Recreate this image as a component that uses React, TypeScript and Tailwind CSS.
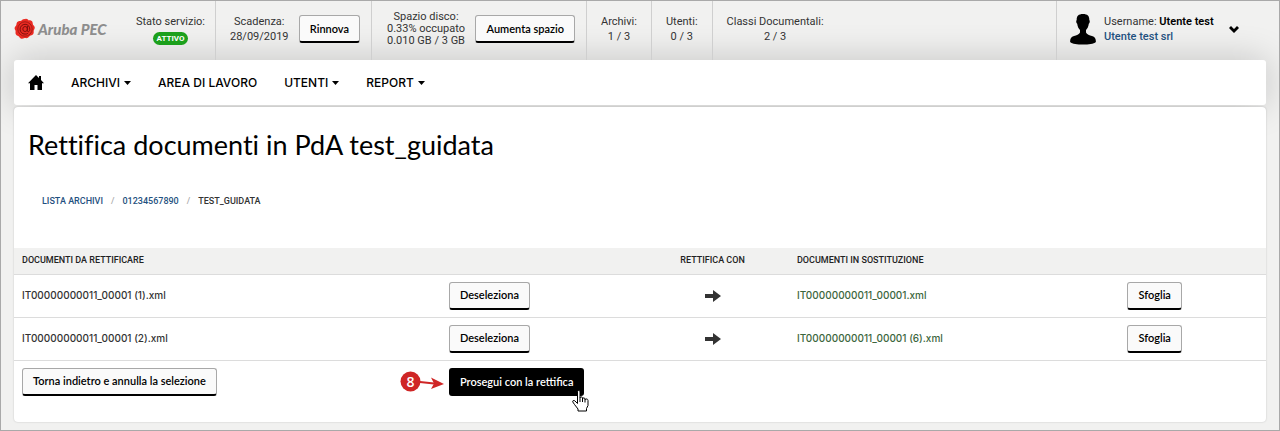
import React from "react";

type Riga = {
	id: number;
	documento: string;
	sostituzione: string;
};

const righe: Riga[] = [
	{
		id: 1,
		documento: "IT00000000011_00001 (1).xml",
		sostituzione: "IT00000000011_00001.xml",
	},
	{
		id: 2,
		documento: "IT00000000011_00001 (2).xml",
		sostituzione: "IT00000000011_00001 (6).xml",
	},
];

const menu = [
	{ label: "ARCHIVI", dropdown: true },
	{ label: "AREA DI LAVORO", dropdown: false },
	{ label: "UTENTI", dropdown: true },
	{ label: "REPORT", dropdown: true },
];

function Button({ children }: { children: React.ReactNode }) {
	return (
		<button
			type="button"
			className="h-7 shrink-0 cursor-pointer whitespace-nowrap rounded-[3px] border border-b-2 border-[#a8a8a8] border-b-black bg-[#fafafa] px-[10px] font-['Lato',sans-serif] text-[11px] font-semibold text-black"
		>
			{children}
		</button>
	);
}

function Logo() {
	return (
		<a href="#" className="flex w-[104px] shrink-0 items-center gap-[2px] pb-[3px]">
			<svg viewBox="0 0 22 22" className="h-[22px] w-[22px] shrink-0">
				<path
					d="M11 1.2c1.5-.9 3 .2 3.600 1.200 1.500-.2 3.500.3 4 2 .3 1.200 0 1.800.9 2.900 1.300 1.300 1.800 2.700.7 4.200-.8 1.100-.4 2-.5 3.300-.3 1.800-1.700 2.500-3.100 2.800-1.200.4-1.500 1.500-2.600 2.200-1.500.9-2.500.1-3.500.3-1.200.3-2.200 1.200-3.700.5-1.200-.6-1.200-1.800-2.200-2.400-1.400-.7-3-1.300-3.100-3 0-1.200.4-2-.3-3.200-.9-1.500-.8-3 .5-4.100 1-.9.6-1.700 1-2.900.6-1.500 2-1.900 3.500-1.900 1.300 0 1.600-.9 2.400-1.500.8-.6 1.700-.8 2.400-.4z"
					fill="#ea2a22"
				/>
				<circle cx="11" cy="11" r="7.200" fill="none" stroke="#a51a14" strokeWidth="1" />
				<path
					d="M13.400 8v4.600c0 1.800 2.400 1.500 2.400-1.300 0-3-2-5-4.700-5s-5 2.100-5 4.900 2 4.900 5 4.900c1 0 1.900-.2 2.700-.7M13.400 11a2.300 2.500 0 1 1-4.600 0 2.300 2.500 0 0 1 4.600 0z"
					fill="none"
					stroke="#7a0f0b"
					strokeWidth="1"
				/>
			</svg>
			<span className="whitespace-nowrap font-['Lato',sans-serif] text-[15px] font-black italic text-[#8d8d8d]">
				Aruba PEC
			</span>
		</a>
	);
}

function Caret() {
	return (
		<svg viewBox="0 0 7 4" className="h-1 w-[7px]">
			<path d="M0 0h7L3.500 4z" fill="currentColor" />
		</svg>
	);
}

function Contatore({ label, valore }: { label: string; valore: string }) {
	return (
		<div className="flex min-w-[60px] items-center justify-center border-l border-[#cfcfcf] px-[14px] pb-[3px] text-center leading-[15px]">
			<p className="whitespace-nowrap">
				{label}
				<br />
				{valore}
			</p>
		</div>
	);
}

function TopBar() {
	return (
		<header className="flex h-[59px] items-stretch pl-[13px] font-['Roboto',sans-serif] text-[11px] text-[#333]">
			<Logo />
			<div className="flex w-[97px] shrink-0 flex-col items-center justify-center pb-[3px] pl-2 leading-[15px]">
				<span>Stato servizio:</span>
				<span className="mt-[3px] rounded-full bg-[#1ca01c] px-1 text-[8px] leading-[13px] font-bold text-white">
					ATTIVO
				</span>
			</div>
			<div className="flex w-[156px] shrink-0 items-center justify-between border-l border-[#cfcfcf] pr-[11px] pb-[3px] pl-[14px] text-center leading-[15px]">
				<p>
					Scadenza:
					<br />
					28/09/2019
				</p>
				<Button>Rinnova</Button>
			</div>
			<div className="flex w-[215px] shrink-0 items-center justify-between border-l border-[#cfcfcf] pr-[11px] pb-[3px] pl-[15px] text-center leading-3">
				<p className="whitespace-nowrap">
					Spazio disco:
					<br />
					0.33% occupato
					<br />
					0.010 GB / 3 GB
				</p>
				<Button>Aumenta spazio</Button>
			</div>
			<Contatore label="Archivi:" valore="1 / 3" />
			<Contatore label="Utenti:" valore="0 / 3" />
			<Contatore label="Classi Documentali:" valore="2 / 3" />
			<div className="ml-auto flex w-[223px] shrink-0 items-center border-l border-[#cfcfcf] pr-10 pb-[3px] pl-[13px]">
				<svg viewBox="0 0 26 32" className="h-8 w-[26px] shrink-0">
					<path
						d="M13 1c4.500 0 6.500 2 6.300 6 .8.500.6 3-.5 3.700-.4 2.800-1.300 4.800-2.800 6.300v2.500c.8 2 3.500 2.700 6 3.500 2.800.9 4 2.600 3.900 6-2.200 2-7.200 2.600-12.900 2.600S2.300 31 .1 29c-.1-3.400 1.100-5.100 3.900-6 2.500-.8 5.200-1.500 6-3.500V17c-1.500-1.500-2.400-3.500-2.800-6.300C6.100 10 5.900 7.500 6.700 7 6.500 3 8.500 1 13 1z"
						fill="#000"
					/>
				</svg>
				<p className="ml-2 whitespace-nowrap leading-[15px]">
					Username: <b className="font-semibold text-black">Utente test</b>
					<br />
					<a href="#" className="font-medium text-[#1f5180]">
						Utente test srl
					</a>
				</p>
				<button type="button" aria-label="Menu utente" className="ml-auto cursor-pointer">
					<svg viewBox="0 0 10 7" className="h-[7px] w-[10px]">
						<path d="M0 2 2 0l3 3 3-3 2 2-5 5z" fill="#000" />
					</svg>
				</button>
			</div>
		</header>
	);
}

function NavBar() {
	return (
		<nav className="mx-[13px] flex h-[45px] items-center gap-[27px] rounded-[3px] bg-white pl-[14px] text-[12px] font-medium text-black shadow-[0_0_36px_rgba(0,0,0,0.2)]">
			<a href="#" aria-label="Home">
				<svg viewBox="0 0 16 15" className="h-[15px] w-4">
					<path d="M8 0l3 3V1h2v4l3 3.200h-2V15H9.500v-5h-3v5H2V8.200H0z" fill="#000" />
				</svg>
			</a>
			{menu.map((item) => (
				<a key={item.label} href="#" className="flex items-center gap-1 whitespace-nowrap">
					{item.label}
					{item.dropdown && <Caret />}
				</a>
			))}
		</nav>
	);
}

function Freccia() {
	return (
		<svg viewBox="0 0 16 12" className="mx-auto h-3 w-4">
			<path d="M0 4h8V0l8 6-8 6V8H0z" fill="#333" />
		</svg>
	);
}

function Segnaposto() {
	return (
		<div className="absolute top-[3px] right-full mr-[5px] h-[22px] w-11">
			<svg viewBox="0 0 44 22" className="absolute inset-0">
				<path d="M20 11l14 1.500" stroke="#cf2626" strokeWidth="2" />
				<path d="M31 6.500l13 6.500-13 5 3-5.500z" fill="#cf2626" />
				<circle cx="10.500" cy="10.500" r="10" fill="#cf2626" />
			</svg>
			<span className="relative block w-[21px] text-center font-['Open_Sans',sans-serif] text-[14px] leading-[21px] font-semibold text-white">
				8
			</span>
		</div>
	);
}

function Mano() {
	return (
		<svg viewBox="0 0 17 22" className="absolute top-[22px] right-[-5px] h-[22px] w-[17px]">
			<path
				d="M5.500 13.500V2c0-2 2.500-2 2.500 0v6c0-1.500 2.500-1.500 2.500 0v1c0-1.500 2.500-1.500 2.500 0v1c0-1.500 3-1.500 3 .5v5l-1.500 3v2.500H6v-2L2.500 14.500.8 12c-.5-1.500 1-2 2-1.200z"
				fill="#fff"
				stroke="#000"
			/>
			<path d="M8 8v4M10.500 9v3M13 10v2.500" stroke="#000" />
		</svg>
	);
}

export default function App() {
	return (
		<div className="min-h-screen overflow-hidden border border-[#a9a9a9] bg-[#f1f1f0] font-['Inter',sans-serif]">
			<TopBar />
			<NavBar />
			<main className="relative mx-[13px] mt-[2px] mb-2 rounded-[4px] bg-white pt-[22px] pb-[19px] shadow-[0_0_2px_rgba(0,0,0,0.2)]">
				<h1 className="px-[14px] font-['Lato',sans-serif] text-[27px] leading-8 text-black [font-variant-ligatures:none]">
					Rettifica documenti in PdA test_guidata
				</h1>
				<ol className="mt-[34px] mb-10 flex gap-2 px-7 font-['Roboto',sans-serif] text-[9px] leading-[13px] font-medium text-[#1f5180]">
					<li>
						<a href="#">LISTA ARCHIVI</a>
					</li>
					<li className="text-[#aaa]">/</li>
					<li>
						<a href="#">01234567890</a>
					</li>
					<li className="text-[#aaa]">/</li>
					<li className="text-[#333]">TEST_GUIDATA</li>
				</ol>
				<table className="w-full table-fixed text-left text-[10px] font-medium text-[#333]">
					<colgroup>
						<col className="w-[34.100%]" />
						<col className="w-[15.600%]" />
						<col className="w-[12.200%]" />
						<col className="w-[26.400%]" />
						<col />
					</colgroup>
					<thead>
						<tr className="h-[26px] border-b border-[#dcdcdc] bg-[#f1f1f0] font-['Roboto',sans-serif] text-[9px] text-[#222]">
							<th className="px-2 font-medium">DOCUMENTI DA RETTIFICARE</th>
							<th />
							<th className="px-2 text-center font-medium">RETTIFICA CON</th>
							<th className="px-2 font-medium">DOCUMENTI IN SOSTITUZIONE</th>
							<th />
						</tr>
					</thead>
					<tbody>
						{righe.map((riga) => (
							<tr key={riga.id} className="h-[43px] border-b border-[#dcdcdc]">
								<td className="px-2">{riga.documento}</td>
								<td className="px-2">
									<Button>Deseleziona</Button>
								</td>
								<td className="px-2">
									<Freccia />
								</td>
								<td className="px-2 text-[#3c663d]">{riga.sostituzione}</td>
								<td className="px-2">
									<Button>Sfoglia</Button>
								</td>
							</tr>
						))}
					</tbody>
					<tfoot>
						<tr className="h-[43px]">
							<td className="px-2">
								<Button>Torna indietro e annulla la selezione</Button>
							</td>
							<td className="px-2">
								<div className="relative inline-block align-middle">
									<button
										type="button"
										className="block h-7 cursor-pointer whitespace-nowrap rounded-[3px] bg-black px-[11px] font-['Lato',sans-serif] text-[11px] font-semibold text-white"
									>
										Prosegui con la rettifica
									</button>
									<Segnaposto />
									<Mano />
								</div>
							</td>
							<td colSpan={3} />
						</tr>
					</tfoot>
				</table>
			</main>
		</div>
	);
}
